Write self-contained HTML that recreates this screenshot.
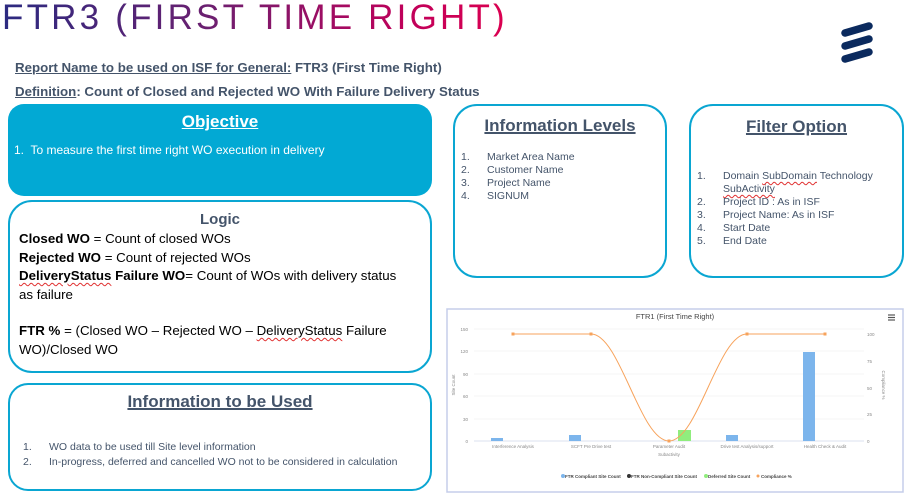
<!DOCTYPE html>
<html><head><meta charset="utf-8"><style>
*{margin:0;padding:0;box-sizing:border-box}
body{width:907px;height:493px;background:#fff;position:relative;overflow:hidden;font-family:"Liberation Sans",Arial,sans-serif;color:#000}
.abs{position:absolute}
.title{left:2px;top:-2px;font-size:35px;letter-spacing:3.2px;white-space:nowrap;background:linear-gradient(90deg,#2b2a80,#6a2070 40%,#c0005a 80%,#dc0050);-webkit-background-clip:text;background-clip:text;color:transparent;font-weight:normal}
.sub{left:15px;font-size:13.3px;font-weight:bold;color:#44546a;white-space:nowrap}
.sub u{text-decoration-thickness:1px}
.box{border:2px solid #0aa6d2;border-radius:20px;background:#fff}
.h{font-weight:bold;color:#44546a;text-align:center;font-size:17px}
.h u{text-decoration-thickness:1.5px}
.list{font-size:10.5px;color:#44546a;line-height:12.9px}
.list div{position:relative;padding-left:26px}
.list .n{position:absolute;left:0}
.sq{text-decoration:underline wavy #e03030;text-decoration-thickness:1px;text-underline-offset:2px}
</style></head><body>
<div class="abs title">FTR3 (FIRST TIME RIGHT)</div>
<svg class="abs" style="left:838px;top:22px" width="40" height="46" viewBox="0 0 40 46">
<g stroke="#0b2a5e" stroke-width="7.5" stroke-linecap="round">
<line x1="7" y1="11" x2="31" y2="4"/><line x1="7" y1="24" x2="31" y2="17"/><line x1="7" y1="37" x2="31" y2="30"/></g></svg>
<div class="abs sub" style="top:60px"><u>Report Name to be used on ISF for General:</u> FTR3 (First Time Right)</div>
<div class="abs sub" style="top:84px"><u>Definition</u>: Count of Closed and Rejected WO With Failure Delivery Status</div>

<div class="abs" style="left:8px;top:104px;width:424px;height:92px;background:#02a9d4;border-radius:16px;color:#fff">
<div style="text-align:center;font-weight:bold;font-size:17px;margin-top:8px"><u>Objective</u></div>
<div style="font-size:12px;margin:11px 0 0 6px">1.&nbsp; To measure the first time right WO execution in delivery</div>
</div>

<div class="abs box" style="left:8px;top:200px;width:424px;height:173px;border-radius:24px">
<div class="h" style="font-size:15px;margin-top:9px">Logic</div>
<div style="font-size:13.3px;line-height:18.5px;margin:2px 24px 0 9px">
<div><b>Closed WO</b> = Count of closed WOs</div>
<div><b>Rejected WO</b> = Count of rejected WOs</div>
<div><b><span class="sq">DeliveryStatus</span> Failure WO</b>= Count of WOs with delivery status as failure</div>
<div style="height:18px"></div>
<div><b>FTR %</b> = (Closed WO – Rejected WO – <span class="sq">DeliveryStatus</span> Failure WO)/Closed WO</div>
</div></div>

<div class="abs box" style="left:8px;top:383px;width:424px;height:108px">
<div class="h" style="margin-top:7px"><u>Information to be Used</u></div>
<div class="list" style="margin:28px 0 0 13px;line-height:14.5px">
<div><span class="n">1.</span>WO data to be used till Site level information</div>
<div><span class="n">2.</span>In-progress, deferred and cancelled WO not to be considered in calculation</div>
</div></div>

<div class="abs box" style="left:453px;top:104px;width:214px;height:174px;border-radius:24px">
<div class="h" style="margin-top:10px"><u>Information Levels</u></div>
<div class="list" style="margin:15px 0 0 6px">
<div><span class="n">1.</span>Market Area Name</div><div><span class="n">2.</span>Customer Name</div><div><span class="n">3.</span>Project Name</div><div><span class="n">4.</span>SIGNUM</div>
</div></div>

<div class="abs box" style="left:689px;top:104px;width:215px;height:174px;border-radius:24px">
<div class="h" style="margin-top:11px"><u>Filter Option</u></div>
<div class="list" style="margin:33px 0 0 6px;padding-right:4px">
<div><span class="n">1.</span>Domain <span class="sq">SubDomain</span> Technology <span class="sq">SubActivity</span></div>
<div><span class="n">2.</span>Project ID : As in ISF</div><div><span class="n">3.</span>Project Name: As in ISF</div><div><span class="n">4.</span>Start Date</div><div><span class="n">5.</span>End Date</div>
</div></div>

<svg class="abs" style="left:446px;top:308px" width="459" height="185" viewBox="446 308 459 185" font-family="Liberation Sans,sans-serif">
<rect x="447" y="309" width="456" height="183" fill="#fff" stroke="#c5cdea" stroke-width="1.5"/>
<text x="675" y="319" font-size="7.5" fill="#444" text-anchor="middle">FTR1 (First Time Right)</text>
<g stroke="#555" stroke-width="1.2"><line x1="888" y1="315" x2="895" y2="315"/><line x1="888" y1="317.5" x2="895" y2="317.5"/><line x1="888" y1="320" x2="895" y2="320"/></g>
<g stroke="#eee" stroke-width="0.6"><line x1="474" y1="329" x2="864" y2="329"/><line x1="474" y1="351" x2="864" y2="351"/><line x1="474" y1="374" x2="864" y2="374"/><line x1="474" y1="396" x2="864" y2="396"/><line x1="474" y1="419" x2="864" y2="419"/></g>
<line x1="474" y1="441" x2="864" y2="441" stroke="#cfd6ea" stroke-width="0.8"/>
<g font-size="4.5" fill="#888" text-anchor="end"><text x="468" y="331">150</text><text x="468" y="353">120</text><text x="468" y="376">90</text><text x="468" y="398">60</text><text x="468" y="421">30</text><text x="468" y="443">0</text></g>
<g font-size="4.5" fill="#888"><text x="867" y="336">100</text><text x="867" y="363">75</text><text x="867" y="390">50</text><text x="867" y="416">25</text><text x="867" y="443">0</text></g>
<text x="455" y="385" font-size="4.5" fill="#888" transform="rotate(-90 455 385)" text-anchor="middle">Site Count</text>
<text x="882" y="385" font-size="4.5" fill="#888" transform="rotate(90 882 385)" text-anchor="middle">Compliance %</text>
<g fill="#7cb5ec"><rect x="491" y="438" width="12" height="3"/><rect x="569" y="435" width="12" height="6"/><rect x="726" y="435" width="12" height="6"/><rect x="803" y="352" width="12" height="89"/></g>
<rect x="678" y="430" width="13" height="11" fill="#90ed7d"/>
<path d="M513 334 L591 334 C620 334 640 441 669 441 C698 441 718 334 747 334 L825 334" fill="none" stroke="#f7a35c" stroke-width="1"/>
<g fill="#f7a35c"><rect x="511.5" y="332.5" width="3" height="3"/><rect x="589.5" y="332.5" width="3" height="3"/><rect x="667.5" y="439.5" width="3" height="3"/><rect x="745.5" y="332.5" width="3" height="3"/><rect x="823.5" y="332.5" width="3" height="3"/></g>
<g font-size="4.5" fill="#888" text-anchor="middle"><text x="513" y="448">Interference Analysis</text><text x="591" y="448">SCFT Pre Drive test</text><text x="669" y="448">Parameter Audit</text><text x="747" y="448">Drive test Analysis/support</text><text x="825" y="448">Health Check &amp; Audit</text><text x="669" y="456">Subactivity</text></g>
<g font-size="4.5" font-weight="bold" fill="#444">
<circle cx="563" cy="476" r="2" fill="#7cb5ec"/><text x="565" y="478">FTR Compliant Site Count</text>
<circle cx="629" cy="476" r="2" fill="#333"/><text x="631" y="478">FTR Non-Compliant Site Count</text>
<circle cx="706" cy="476" r="2" fill="#90ed7d"/><text x="708" y="478">Deferred Site Count</text>
<circle cx="758" cy="476" r="1.5" fill="#f7a35c"/><text x="761" y="478">Compliance %</text></g>
</svg>
</body></html>
